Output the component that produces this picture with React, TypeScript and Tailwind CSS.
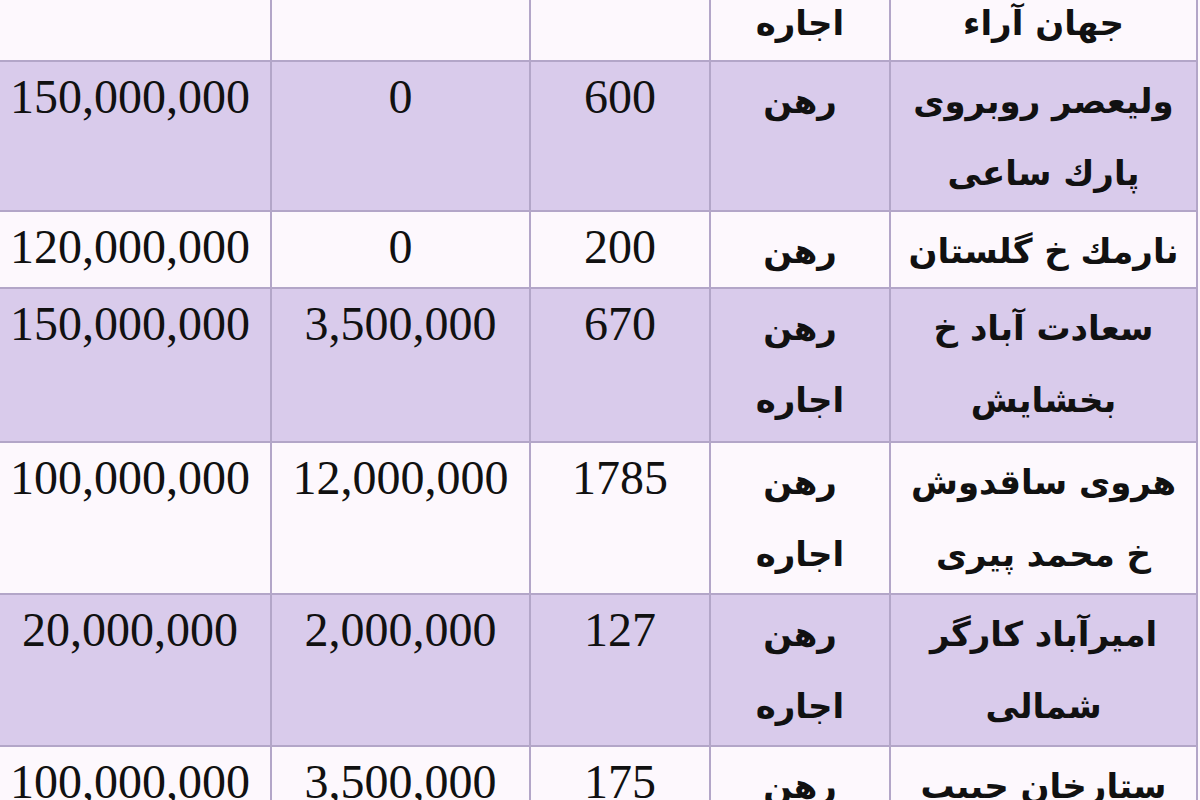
type Row = {
  address: string[]
  type: string[]
  area: string
  rent: string
  deposit: string
  h: string
}

const rows: Row[] = [
  { address: ['شهرک غرب', 'جهان آراء'], type: ['رهن', 'اجاره'], area: '90', rent: '1,500,000', deposit: '50,000,000', h: 'h-[150px]' },
  { address: ['ولیعصر روبروی', 'پارك ساعی'], type: ['رهن'], area: '600', rent: '0', deposit: '150,000,000', h: 'h-[150px]' },
  { address: ['نارمك خ گلستان'], type: ['رهن'], area: '200', rent: '0', deposit: '120,000,000', h: 'h-[77px]' },
  { address: ['سعادت آباد خ', 'بخشایش'], type: ['رهن', 'اجاره'], area: '670', rent: '3,500,000', deposit: '150,000,000', h: 'h-[154px]' },
  { address: ['هروی ساقدوش', 'خ محمد پیری'], type: ['رهن', 'اجاره'], area: '1785', rent: '12,000,000', deposit: '100,000,000', h: 'h-[152px]' },
  { address: ['امیرآباد کارگر', 'شمالی'], type: ['رهن', 'اجاره'], area: '127', rent: '2,000,000', deposit: '20,000,000', h: 'h-[152px]' },
  { address: ['ستارخان حبیب', 'اللهی'], type: ['رهن', 'اجاره'], area: '175', rent: '3,500,000', deposit: '100,000,000', h: 'h-[152px]' },
]

const fa = "font-['DejaVu_Sans',sans-serif] text-[34px] font-bold leading-[72px]"
const num = "font-['Liberation_Serif',serif] text-[48px] leading-[70px]"
const cell = 'border-2 border-[#b3a6c8] p-0 align-top text-center'

export default function App() {
  return (
    <div dir="rtl" className="w-[1200px] h-[800px] overflow-hidden bg-[#fdf8fd]">
      <table className="mt-[-90px] mr-[2px] w-[1208px] table-fixed border-collapse text-[#111]">
        <colgroup>
          <col className="w-[307px]" />
          <col className="w-[180px]" />
          <col className="w-[180px]" />
          <col className="w-[259px]" />
          <col className="w-[282px]" />
        </colgroup>
        <tbody>
          {rows.map((r, i) => (
            <tr key={i} className={(i % 2 === 1 ? 'bg-[#d9cbeb] ' : 'bg-[#fdf8fd] ') + r.h}>
              <td className={cell}>
                <div className="pt-[3px]">
                  {r.address.map((l, j) => (
                    <div key={j} className={fa + ' whitespace-nowrap'}>
                      {l}
                    </div>
                  ))}
                </div>
              </td>
              <td className={cell}>
                <div className="pt-[3px]">
                  {r.type.map((l, j) => (
                    <div key={j} className={fa}>
                      {l}
                    </div>
                  ))}
                </div>
              </td>
              <td className={cell}>
                <div dir="ltr" className={num}>{r.area}</div>
              </td>
              <td className={cell}>
                <div dir="ltr" className={num}>{r.rent}</div>
              </td>
              <td className={cell}>
                <div dir="ltr" className={num}>{r.deposit}</div>
              </td>
            </tr>
          ))}
        </tbody>
      </table>
    </div>
  )
}
